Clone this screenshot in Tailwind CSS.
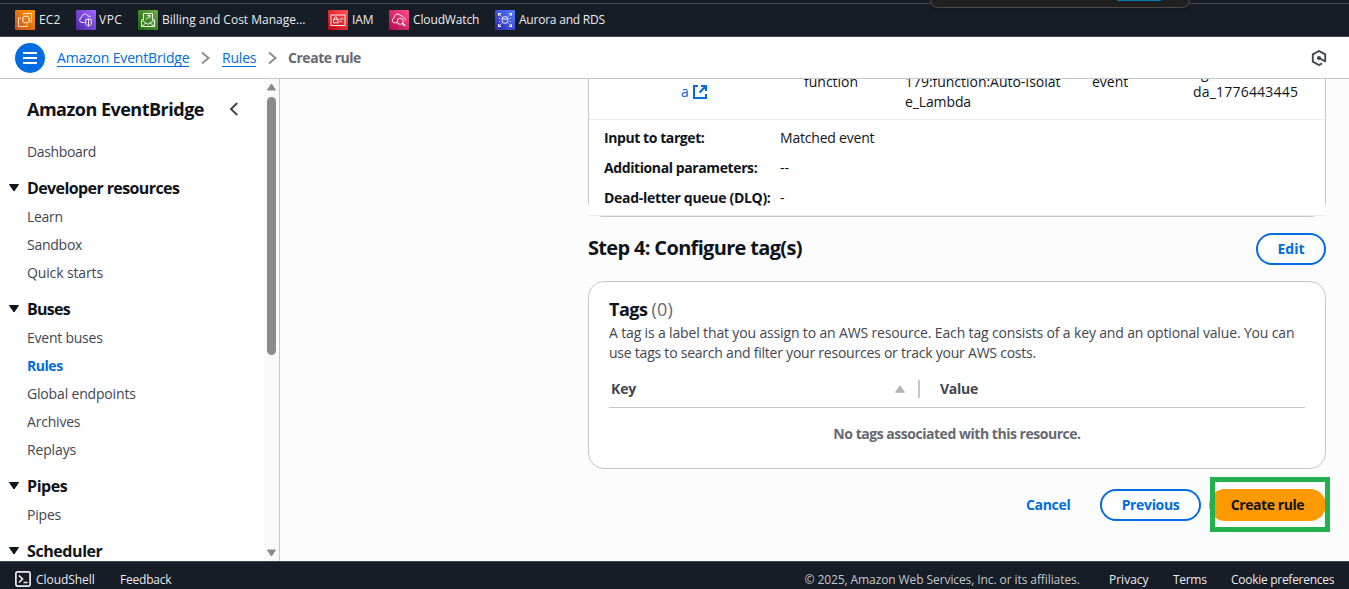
<!DOCTYPE html>
<html lang="en">
<head>
<meta charset="utf-8">
<title>Create rule | Amazon EventBridge</title>
<script src="https://cdn.jsdelivr.net/npm/@tailwindcss/browser@4"></script>
</head>
<body class="flex h-[589px] w-[1349px] flex-col overflow-hidden bg-[#fcfcfd] font-['Open_Sans','Noto_Sans',sans-serif] text-sm leading-5 text-[#0f141a]">

<!-- Service shortcuts bar -->
<header class="relative flex h-[37px] shrink-0 flex-col border-b border-[#424650] bg-[#161d26]">
  <div class="mt-[3px] h-px shrink-0 bg-[#424650]"></div>
  <nav class="flex h-8 items-center pl-[15px] text-xs font-medium text-[#ebebf0]">
    <a class="flex w-[61px] items-center gap-1">
      <svg class="size-5 shrink-0" viewBox="0 0 20 20"><defs><linearGradient id="g1" x1="0" y1="1" x2="1" y2="0"><stop stop-color="#c8511b"/><stop offset="1" stop-color="#f90"/></linearGradient></defs><rect width="20" height="20" rx="1" fill="url(#g1)"/><g fill="none" stroke="#fff" stroke-width=".8" stroke-opacity=".9"><rect x="8" y="6.500" width="6" height="6" rx="1"/><path d="M10 6.500V5.300M12 6.500V5.300M10 12.500v1.200M12 12.500v1.200M8 8.500H6.800M8 10.500H6.800M14 8.500h1.200M14 10.500h1.200M8.500 5V3.500h8V12h-1.800M6 8H3.500v8.500H12V14.500"/></g></svg>
      <span class="tracking-[0.1px]">EC2</span></a>
    <a class="flex w-[62px] items-center gap-[3px]">
      <svg class="size-5 shrink-0" viewBox="0 0 20 20"><defs><linearGradient id="g2" x1="0" y1="1" x2="1" y2="0"><stop stop-color="#4d27a8"/><stop offset="1" stop-color="#a166ff"/></linearGradient></defs><rect width="20" height="20" rx="1" fill="url(#g2)"/><g fill="none" stroke="#fff" stroke-width=".9"><path d="M8.500 12.500H6a2.500 2.500 0 0 1-.5-4.900C5.500 3.500 11 3 12 6.300c1.300-.8 2.300 0 2.400 1.200"/><path d="M12.500 8.800l2.800 1v3.700c0 1.300-1.300 2-2.800 2.700-1.500-.7-2.800-1.400-2.800-2.700V9.800zM12.500 9v7"/></g></svg>
      <span class="tracking-[0.5px]">VPC</span></a>
    <a class="flex w-[190px] items-center gap-1">
      <svg class="size-5 shrink-0" viewBox="0 0 20 20"><defs><linearGradient id="g3" x1="0" y1="1" x2="1" y2="0"><stop stop-color="#1b660f"/><stop offset="1" stop-color="#6cae3e"/></linearGradient></defs><rect width="20" height="20" rx="1" fill="url(#g3)"/><g fill="none" stroke="#fff" stroke-width=".9"><path d="M5.500 10V3.500h9V10M3.500 10.200v6.300h13v-6.300L10 14.300zM3.500 10.200l2-1.200M16.500 10.200l-2-1.200M3.700 16.300l4.300-3.400M16.300 16.300L12 12.900"/><path d="M8 9.500l4-4M9.300 5.500H12v2.700"/></g></svg>
      <span>Billing and Cost Manage...</span></a>
    <a class="flex w-[61px] items-center gap-1">
      <svg class="size-5 shrink-0" viewBox="0 0 20 20"><defs><linearGradient id="g4" x1="0" y1="1" x2="1" y2="0"><stop stop-color="#bd0816"/><stop offset="1" stop-color="#ff5252"/></linearGradient></defs><rect width="20" height="20" rx="1" fill="url(#g4)"/><g fill="none" stroke="#fff" stroke-width=".9"><rect x="3" y="5" width="14" height="10.500"/><rect x="5.500" y="9.300" width="4.500" height="3.500"/><path d="M6.500 9.300V8.200c0-1.800 2.500-1.800 2.500 0v1.100M11.500 9h3.800M11.500 11.500h2.300"/></g></svg>
      <span class="tracking-[-0.1px]">IAM</span></a>
    <a class="flex w-[106px] items-center gap-1">
      <svg class="size-5 shrink-0" viewBox="0 0 20 20"><defs><linearGradient id="g5" x1="0" y1="1" x2="1" y2="0"><stop stop-color="#b0084d"/><stop offset="1" stop-color="#ff4f8b"/></linearGradient></defs><rect width="20" height="20" rx="1" fill="url(#g5)"/><g fill="none" stroke="#fff" stroke-width=".9"><path d="M8 12.800H5.500a2.400 2.400 0 0 1-.5-4.700C5 3.500 10.500 3 11.700 6c1.200-.6 2.300.2 2.500 1.500 2 .3 2.500 2 2 3.200"/><circle cx="11.200" cy="11.300" r="3"/><path d="M13.300 13.300l2.900 2.600" stroke-width="1.500"/></g></svg>
      <span class="tracking-[-0.13px]">CloudWatch</span></a>
    <a class="flex items-center gap-1">
      <svg class="size-5 shrink-0" viewBox="0 0 20 20"><defs><linearGradient id="g6" x1="0" y1="1" x2="1" y2="0"><stop stop-color="#2e27ad"/><stop offset="1" stop-color="#527fff"/></linearGradient></defs><rect width="20" height="20" rx="1" fill="url(#g6)"/><g fill="none" stroke="#fff" stroke-width=".9"><path d="M3.500 6V3.500H6M3.500 3.500l3 3M14 3.500h2.500V6M16.500 3.500l-3 3M3.500 14v2.500H6M3.500 16.500l3-3M14 16.500h2.500V14M16.500 16.500l-3-3"/><ellipse cx="10" cy="8" rx="2.800" ry="1.200"/><path d="M7.200 8v4c0 1.600 5.600 1.600 5.600 0V8M4.700 8v1M4.700 11v1M15.300 8v1M15.300 11v1"/></g></svg>
      <span class="tracking-[-0.22px]">Aurora and RDS</span></a>
  </nav>
  <!-- Floating toolbar peeking in from the top edge -->
  <div class="absolute top-0 left-[930px] flex h-2 w-[260px] justify-end rounded-b-xl border border-t-0 border-[#494949] bg-[#1f1f1f] pr-7 shadow">
    <div class="h-px w-11 rounded-b bg-[#0078b4]"></div>
  </div>
</header>

<!-- Breadcrumb bar -->
<div class="flex h-[42px] shrink-0 items-center border-b border-[#c6c6cd] bg-white pr-[22px] pl-[15px]">
  <button class="flex size-[30px] items-center justify-center rounded-full bg-[#006ce0]">
    <svg class="h-3 w-3.5" viewBox="0 0 14 12" stroke="#fff" stroke-width="2"><path d="M0 1h14M0 6h14M0 11h14"/></svg>
  </button>
  <a class="ml-3 h-[19px] w-[132px] border-b border-[#006ce0] leading-5 tracking-[-0.16px] whitespace-nowrap text-[#006ce0]">Amazon EventBridge</a>
  <svg class="ml-3 h-3.5 w-2.5" viewBox="0 0 10 14" fill="none" stroke="#8c8c94" stroke-width="2"><path d="M1 1.500l6.500 5.500L1 12.500"/></svg>
  <a class="ml-[11px] h-[19px] w-[34px] border-b border-[#006ce0] leading-5 tracking-[-0.2px] text-[#006ce0]">Rules</a>
  <svg class="ml-3 h-3.5 w-2.5" viewBox="0 0 10 14" fill="none" stroke="#8c8c94" stroke-width="2"><path d="M1 1.500l6.500 5.500L1 12.500"/></svg>
  <span class="ml-2.5 font-bold tracking-[-0.47px] text-[#656871]">Create rule</span>
  <svg class="ml-auto size-4" viewBox="0 0 16 16" fill="none" stroke="#424650" stroke-width="1.900"><path d="M11 13.400L8 15 1.800 11.600V4.400L8 1l6.200 3.400v7.200"/><path d="M8 8l6.600 3.600"/><circle cx="8" cy="8" r="1.100" fill="#424650"/></svg>
</div>

<div class="flex min-h-0 flex-1">
  <!-- Side navigation -->
  <aside class="flex w-[280px] shrink-0 overflow-hidden border-r border-[#c6c6cd] bg-white">
    <div class="w-[264px] shrink-0 text-[#424650]">
      <div class="flex h-[59px] items-center pl-[27px]">
        <h2 class="w-[202px] pt-px text-lg font-bold tracking-[-0.5px] text-[#0f141a]">Amazon EventBridge</h2>
        <svg class="h-3.5 w-2.5" viewBox="0 0 10 14" fill="none" stroke="#424650" stroke-width="2"><path d="M8.200 1L2 7l6.200 6"/></svg>
      </div>
      <a class="flex h-7 items-center pl-[27px] tracking-[-0.36px]">Dashboard</a>
      <h3 class="mt-[7px] flex h-[30px] items-center gap-2 pl-[9px] text-base font-bold tracking-[-0.6px] text-[#0f141a]"><svg class="h-2 w-2.5" viewBox="0 0 10 8"><path d="M.5.500h9L5 7z" fill="#0f141a" stroke="#0f141a" stroke-linejoin="round"/></svg>Developer resources</h3>
      <a class="flex h-7 items-center pl-[27px] tracking-[-0.3px]">Learn</a>
      <a class="flex h-7 items-center pl-[27px] tracking-[-0.25px]">Sandbox</a>
      <a class="flex h-7 items-center pl-[27px] tracking-[-0.13px]">Quick starts</a>
      <h3 class="mt-[7px] flex h-[30px] items-center gap-2 pl-[9px] text-base font-bold tracking-[-0.7px] text-[#0f141a]"><svg class="h-2 w-2.5" viewBox="0 0 10 8"><path d="M.5.500h9L5 7z" fill="#0f141a" stroke="#0f141a" stroke-linejoin="round"/></svg>Buses</h3>
      <a class="flex h-7 items-center pl-[27px] tracking-[-0.24px]">Event buses</a>
      <a class="flex h-7 items-center pl-[27px] font-bold tracking-[-0.45px] text-[#006ce0]">Rules</a>
      <a class="flex h-7 items-center pl-[27px] tracking-[-0.17px]">Global endpoints</a>
      <a class="flex h-7 items-center pl-[27px] tracking-[-0.2px]">Archives</a>
      <a class="flex h-7 items-center pl-[27px] tracking-[-0.15px]">Replays</a>
      <h3 class="mt-[7px] flex h-[30px] items-center gap-2 pl-[9px] text-base font-bold tracking-[-0.42px] text-[#0f141a]"><svg class="h-2 w-2.5" viewBox="0 0 10 8"><path d="M.5.500h9L5 7z" fill="#0f141a" stroke="#0f141a" stroke-linejoin="round"/></svg>Pipes</h3>
      <a class="flex h-7 items-center pl-[27px] tracking-[-0.2px]">Pipes</a>
      <h3 class="mt-[7px] flex h-[30px] items-center gap-2 pl-[9px] text-base font-bold tracking-[-0.42px] text-[#0f141a]"><svg class="h-2 w-2.5" viewBox="0 0 10 8"><path d="M.5.500h9L5 7z" fill="#0f141a" stroke="#0f141a" stroke-linejoin="round"/></svg>Scheduler</h3>
    </div>
    <div class="flex w-[15px] shrink-0 flex-col items-center bg-[#fafafa] pt-1 pb-1">
      <svg class="h-2 w-[9px] shrink-0" viewBox="0 0 9 8"><path d="M4.500 1L8.500 7h-8z" fill="#8b8b8b" stroke="#8b8b8b" stroke-linejoin="round"/></svg>
      <div class="mt-1.5 h-[258px] w-[9px] shrink-0 rounded-full bg-[#8b8b8b]"></div>
      <svg class="mt-auto h-2 w-[9px] shrink-0" viewBox="0 0 9 8"><path d="M4.500 7L.5 1h8z" fill="#8b8b8b" stroke="#8b8b8b" stroke-linejoin="round"/></svg>
    </div>
  </aside>

  <main class="ml-[308px] flex w-[738px] flex-col">
    <!-- Target details, scrolled partly out of view -->
    <section class="h-[138px] shrink-0 rounded-b-2xl border border-t-0 border-[#c6c6cd]">
      <div class="h-[137px] overflow-hidden border-b border-[#ebebf0] bg-white">
        <div class="flex h-[41px] items-start border-b border-[#ebebf0]">
          <div class="flex w-[215px] items-center gap-1 pt-[3px] pl-[92px] text-[#006ce0]">a
            <svg class="-ml-px size-4" viewBox="0 0 16 16" fill="none" stroke="#006ce0" stroke-width="2"><path d="M6 2H2v12h12v-4M9 2h5v5M14 2L7.500 8.500"/></svg>
          </div>
          <div class="-mt-[7px] w-[101px]">function</div>
          <div class="-mt-[7px] w-[187px]">
            <div class="tracking-[-0.03px]">179:function:Auto-Isolat</div><div class="tracking-[-0.12px]">e_Lambda</div>
          </div>
          <div class="-mt-[7px] w-[101px]">event</div>
          <div class="-mt-4">
            <div class="pl-2 leading-[19px]">g</div><div class="tracking-[0.2px]">da_1776443445</div>
          </div>
        </div>
        <dl class="grid grid-cols-[176px_1fr] gap-y-2.5 pt-2 pl-[15px]">
          <dt class="font-bold tracking-[-0.42px]">Input to target:</dt><dd class="tracking-[-0.2px]">Matched event</dd>
          <dt class="font-bold tracking-[-0.4px]">Additional parameters:</dt><dd>--</dd>
          <dt class="font-bold tracking-[-0.3px]">Dead-letter queue (DLQ):</dt><dd>-</dd>
        </dl>
      </div>
    </section>

    <div class="mt-4 flex h-8 shrink-0 items-center justify-between">
      <h2 class="pb-0.5 text-xl font-bold tracking-[-0.67px]">Step 4: Configure tag(s)</h2>
      <button class="h-8 w-[70px] rounded-full border-2 border-[#006ce0] bg-white font-bold text-[#006ce0]">Edit</button>
    </div>

    <section class="mt-4 h-[188px] shrink-0 rounded-2xl border border-[#c6c6cd] bg-white px-5 pt-4">
      <h3 class="text-lg leading-[22px] font-bold tracking-[-0.5px]">Tags <span class="font-normal tracking-[0.1px] text-[#656871]">(0)</span></h3>
      <p class="mt-[3px] whitespace-nowrap text-[#424650]"><span class="tracking-[-0.15px]">A tag is a label that you assign to an AWS resource. Each tag consists of a key and an optional value. You can</span><br><span class="tracking-[-0.23px]">use tags to search and filter your resources or track your AWS costs.</span></p>
      <div class="mt-2 flex h-[37px] items-center border-b border-[#c6c6cd] pl-0.5 font-bold text-[#424650]">
        <span class="w-[283px] tracking-[-0.15px]">Key</span>
        <svg class="h-2 w-3" viewBox="0 0 12 8"><path d="M6 .8L10.500 7.300h-9z" fill="#b4b4bb" stroke="#b4b4bb" stroke-linejoin="round"/></svg>
        <span class="ml-3 h-[18px] w-0.5 bg-[#c6c6cd]"></span>
        <span class="ml-5 tracking-[-0.25px]">Value</span>
      </div>
      <p class="mt-4 text-center font-bold tracking-[-0.47px] text-[#656871]">No tags associated with this resource.</p>
    </section>

    <!-- Wizard actions -->
    <div class="mt-5 flex h-8 shrink-0 items-center text-[#006ce0]">
      <button class="ml-[438px] w-11 font-bold tracking-[-0.33px]">Cancel</button>
      <button class="ml-[30px] h-8 w-[101px] rounded-full border-2 border-[#006ce0] bg-white font-bold tracking-[-0.35px]">Previous</button>
      <div class="relative ml-2 flex">
        <button class="h-8 w-[117px] rounded-full bg-[#ff9900] font-bold tracking-[-0.42px] text-[#0f141a]">Create rule</button>
        <div class="absolute -top-3 left-px h-[55px] w-[120px] border-[5px] border-[#22b14c]"></div>
      </div>
    </div>
  </main>
</div>

<footer class="flex h-[28px] shrink-0 items-center border-t border-[#424650] bg-[#161d26] px-[15px] pt-2 text-xs font-medium text-[#ebebf0]">
  <svg class="mb-px size-4" viewBox="0 0 16 16" fill="none" stroke="#ebebf0" stroke-width="1.700"><rect x=".9" y=".9" width="14.200" height="14.200" rx="1.500"/><path d="M4 4.500L7.500 8 4 11.500M8.500 11.500H12.500"/></svg>
  <span class="ml-[5px] w-[84px] tracking-[-0.05px]">CloudShell</span>
  <span class="tracking-[-0.2px]">Feedback</span>
  <span class="ml-auto w-[304.500px] font-normal tracking-[-0.09px] text-[#c6c6cd]">© 2025, Amazon Web Services, Inc. or its affiliates.</span>
  <span class="w-16">Privacy</span>
  <span class="w-[58px] tracking-[-0.3px]">Terms</span>
  <span class="w-[103px] whitespace-nowrap tracking-[-0.28px]">Cookie preferences</span>
</footer>
</body>
</html>
